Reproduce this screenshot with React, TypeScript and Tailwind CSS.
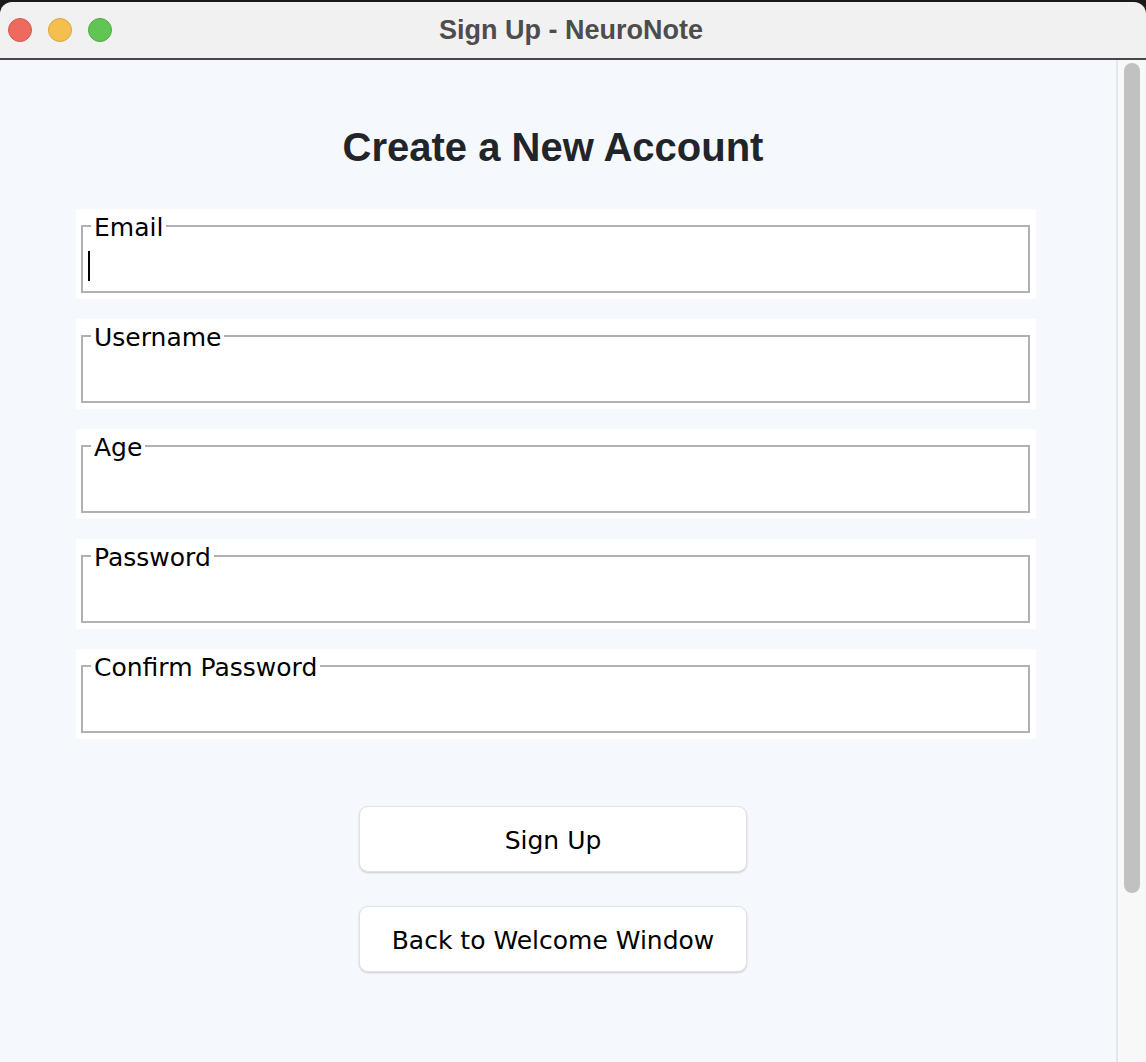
import React from "react";

const fields = ["Email", "Username", "Age", "Password", "Confirm Password"];

function Field({ label, focused }: { label: string; focused?: boolean }) {
  return (
    <div className="bg-white pt-[16px] pl-[5px] pr-[6px] pb-[6px]">
      <div className="relative h-[68px] border-2 border-[#b1b1b1]">
        <span
          className="absolute left-[8px] top-[-12px] bg-white px-[3px] text-[25px] leading-none text-black"
          style={{ fontFamily: '"DejaVu Sans", sans-serif' }}
        >
          {label}
        </span>
        {focused && <div className="absolute left-[5px] top-[24px] h-[30px] w-[2px] bg-black" />}
      </div>
    </div>
  );
}

export default function App() {
  return (
    <div className="h-[1062px] w-[1146px] overflow-hidden bg-[#1c1a18]">
      <div className="flex h-full flex-col overflow-hidden rounded-tl-[12px] rounded-tr-[12px] mt-[2px]">
        <div className="relative flex h-[58px] shrink-0 items-center justify-center bg-[#f1f1f1] border-b-2 border-[#474747]">
          <div className="absolute left-[8px] top-[16px] flex gap-[16px]">
            <div className="h-[24px] w-[24px] rounded-full bg-[#ee6a5f] border border-[#d35a50]" />
            <div className="h-[24px] w-[24px] rounded-full bg-[#f5bf4f] border border-[#d9a43e]" />
            <div className="h-[24px] w-[24px] rounded-full bg-[#61c554] border border-[#52a944]" />
          </div>
          <span
            className="text-[27px] font-bold text-[#4d4d4d] leading-none ml-[-4px]"
            style={{ fontFamily: '"Liberation Sans", Arial, sans-serif' }}
          >
            Sign Up - NeuroNote
          </span>
        </div>
        <div className="flex flex-1 bg-[#f5f8fd]">
          <div className="w-[1116px]">
            <div className="w-[1106px] flex flex-col">
              <h1
                className="mt-[67px] text-center text-[40px] font-bold leading-none text-[#212529]"
                style={{ fontFamily: '"Liberation Sans", Arial, sans-serif' }}
              >
                Create a New Account
              </h1>
              <div className="ml-[76px] mt-[42px] flex w-[960px] flex-col gap-[20px]">
                {fields.map((f, i) => (
                  <Field key={f} label={f} focused={i === 0} />
                ))}
              </div>
              <div
                className="mt-[67px] flex flex-col items-center gap-[34px]"
                style={{ fontFamily: '"DejaVu Sans", sans-serif' }}
              >
                <button className="flex h-[66px] w-[388px] items-center justify-center rounded-[9px] border border-[#e2e2e2] bg-white pt-[3px] text-[25px] text-black shadow-[0_1px_2px_rgba(0,0,0,0.18)]">
                  Sign Up
                </button>
                <button className="flex h-[66px] w-[388px] items-center justify-center rounded-[9px] border border-[#e2e2e2] bg-white pt-[3px] text-[25px] text-black shadow-[0_1px_2px_rgba(0,0,0,0.18)]">
                  Back to Welcome Window
                </button>
              </div>
            </div>
          </div>
          <div className="flex w-[30px] border-l-2 border-[#e6e6e6] bg-[#f8f8f8] pl-[6px] pt-[3px]">
            <div className="h-[830px] w-[16px] rounded-full bg-[#c1c1c1]" />
          </div>
        </div>
      </div>
    </div>
  );
}
